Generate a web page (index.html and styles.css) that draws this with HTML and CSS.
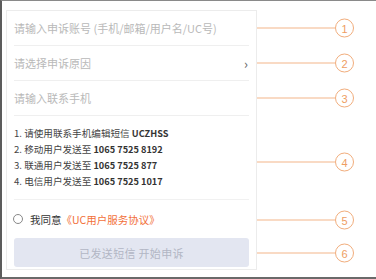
FILE: index.html
```html
<!DOCTYPE html>
<html lang="zh-CN">
<head>
  <meta charset="UTF-8" />
  <title>UC 申诉</title>
  <link rel="stylesheet" href="styles.css">
</head>
<body>
  <div class="frame">
    <div class="card">
      <div class="field">请输入申诉账号 (手机/邮箱/用户名/UC号)</div>
      <div class="field select">
        <span>请选择申诉原因</span>
        <span class="chevron">&rsaquo;</span>
      </div>
      <div class="field">请输入联系手机</div>

      <ol class="steps">
        <li>1. 请使用联系手机编辑短信 <b>UCZHSS</b></li>
        <li>2. 移动用户发送至 <b>1065 7525 8192</b></li>
        <li>3. 联通用户发送至 <b>1065 7525 877</b></li>
        <li>4. 电信用户发送至 <b>1065 7525 1017</b></li>
      </ol>

      <div class="agree">
        <span class="radio"></span>
        <span>我同意</span>
        <a class="link">《UC用户服务协议》</a>
      </div>

      <button class="submit">已发送短信 开始申诉</button>
    </div>

    <!-- annotation markers -->
    <div class="callout" style="top: 27px">
      <span class="line"></span><span class="num">1</span>
    </div>
    <div class="callout" style="top: 62px">
      <span class="line"></span><span class="num">2</span>
    </div>
    <div class="callout" style="top: 97px">
      <span class="line"></span><span class="num">3</span>
    </div>
    <div class="callout" style="top: 161px">
      <span class="line"></span><span class="num">4</span>
    </div>
    <div class="callout" style="top: 219px">
      <span class="line"></span><span class="num">5</span>
    </div>
    <div class="callout" style="top: 252px">
      <span class="line"></span><span class="num">6</span>
    </div>
  </div>
</body>
</html>
```

FILE: styles.css
```css
body {
  margin: 0;
  background: #fff;
  font-family: "Noto Sans CJK SC", "Noto Sans", sans-serif;
}

.frame {
  position: relative;
  width: 376px;
  height: 279px;
  box-sizing: border-box;
  border-top: 1px solid #8a8a8a;
  border-left: 2px solid #5c5c5c;
  border-bottom: 2px solid #6a6a6a;
  padding: 9px 0 0 4px;
}

.card {
  width: 251px;
  box-sizing: border-box;
  border: 1px solid #ececec;
  padding: 0 7px 2px;
  display: flex;
  flex-direction: column;
}

.field {
  height: 34px;
  border-bottom: 1px solid #efefef;
  display: flex;
  align-items: center;
  font-size: 11px;
  color: #b9b9b9;
  white-space: nowrap;
}

.select {
  justify-content: space-between;
}

.chevron {
  font-size: 13px;
  color: #666;
  margin-right: 1px;
}

.steps {
  list-style: none;
  margin: 0;
  padding: 9px 0 10px;
  border-bottom: 1px solid #f1f1f1;
}

.steps li {
  font-size: 9.6px;
  line-height: 16px;
  color: #444;
  white-space: nowrap;
}

.steps b {
  font-weight: bold;
  color: #333;
  font-size: 9.2px;
}

.agree {
  height: 38px;
  display: flex;
  align-items: center;
  font-size: 10.5px;
  color: #333;
}

.radio {
  width: 8px;
  height: 8px;
  border: 1px solid #888;
  border-radius: 50%;
  margin: 0 7px 0 -1px;
}

.link {
  color: #f2703a;
}

.submit {
  height: 29px;
  border: none;
  border-radius: 3px;
  background: #e3e6f1;
  color: #b2b6c4;
  font-family: inherit;
  font-size: 11px;
  letter-spacing: 0.3px;
}

.callout {
  position: absolute;
  left: 255px;
  display: flex;
  align-items: center;
  transform: translateY(-50%);
}

.callout .line {
  width: 78px;
  height: 1px;
  background: #f3b68a;
}

.callout .num {
  width: 17px;
  height: 17px;
  border: 1.3px solid #f1ad7c;
  border-radius: 50%;
  display: flex;
  align-items: center;
  justify-content: center;
  font-family: "Liberation Sans", Arial, sans-serif;
  font-size: 11px;
  color: #ee9d62;
}
```
